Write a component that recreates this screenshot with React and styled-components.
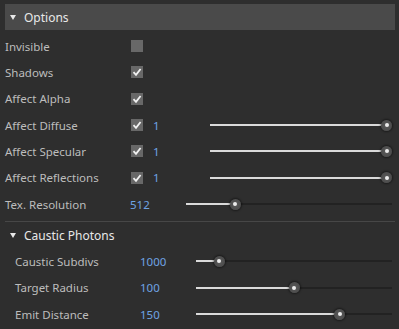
import React from "react";
import styled, { createGlobalStyle } from "styled-components";

const Global = createGlobalStyle`
  html, body { margin: 0; padding: 0; background: #2e2e2e; }
  body { font-family: "Noto Sans", "Open Sans", sans-serif; }
`;

const Page = styled.div`
  width: 399px;
  height: 329px;
  box-sizing: border-box;
  padding: 4px 4px 0 5px;
  background: #2e2e2e;
  overflow: hidden;
`;

const Panel = styled.div`
  width: 390px;
  display: flex;
  flex-direction: column;
`;

const Header = styled.div`
  height: 26px;
  display: flex;
  align-items: center;
  gap: 8px;
  padding-left: 5px;
  background: ${(p) => (p.$filled ? "#4a4a4a" : "transparent")};
  color: #e8e8e8;
  font-size: 12px;
  margin-bottom: ${(p) => p.$mb || 0}px;
`;

const Tri = styled.span`
  width: 0;
  height: 0;
  border-left: 3.5px solid transparent;
  border-right: 3.5px solid transparent;
  border-top: 5px solid #e8e8e8;
  margin-top: 1px;
`;

const Row = styled.div`
  height: 26.33px;
  display: flex;
  align-items: center;
  padding-left: ${(p) => p.$indent || 0}px;
  font-size: 11.5px;
`;

const Label = styled.span`
  flex: 0 0 ${(p) => p.$w}px;
  color: #bdbdbd;
  white-space: nowrap;
`;

const Value = styled.span`
  flex: 0 0 ${(p) => p.$w}px;
  color: #6ea3e3;
`;

const Box = styled.span`
  flex: 0 0 12px;
  height: 12px;
  background: #686868;
  display: flex;
  align-items: center;
  justify-content: center;
  margin-right: ${(p) => p.$mr || 0}px;
`;

const Divider = styled.div`
  height: 1px;
  background: #474747;
  margin-top: 4px;
`;

const Track = styled.div`
  flex: 1;
  position: relative;
  height: 11px;
  margin-right: 3px;
  &::before {
    content: "";
    position: absolute;
    left: 0;
    right: 0;
    top: 4.5px;
    height: 2px;
    background: #222;
  }
`;

const Fill = styled.div`
  position: absolute;
  left: 0;
  top: 4.5px;
  height: 2px;
  background: #dadada;
`;

const Thumb = styled.div`
  position: absolute;
  top: 0;
  width: 11px;
  height: 11px;
  margin-left: -5.5px;
  border-radius: 50%;
  background: radial-gradient(circle, #5a5a5a 0%, #474747 100%);
  box-shadow: 0 0 2px 1px rgba(0, 0, 0, 0.45);
  display: flex;
  align-items: center;
  justify-content: center;
  &::after {
    content: "";
    width: 4px;
    height: 4px;
    border-radius: 50%;
    background: #ececec;
  }
`;

const Check = () => (
  <svg width="10" height="10" viewBox="0 0 10 10">
    <path d="M1.5 5.2 L4 7.8 L8.6 2" fill="none" stroke="#f2f2f2" strokeWidth="1.8" />
  </svg>
);

function Slider({ frac }) {
  const ref = React.useRef(null);
  const [w, setW] = React.useState(0);
  React.useLayoutEffect(() => {
    if (ref.current) setW(ref.current.getBoundingClientRect().width);
  }, []);
  const pos = 5.5 + frac * Math.max(0, w - 11);
  return (
    <Track ref={ref}>
      <Fill style={{ width: pos }} />
      <Thumb style={{ left: pos }} />
    </Track>
  );
}

export default function App() {
  return (
    <Page>
      <Global />
      <Panel>
        <Header $filled $mb={3}>
          <Tri />
          Options
        </Header>
        <Row>
          <Label $w={126}>Invisible</Label>
          <Box />
        </Row>
        <Row>
          <Label $w={126}>Shadows</Label>
          <Box><Check /></Box>
        </Row>
        <Row>
          <Label $w={126}>Affect Alpha</Label>
          <Box><Check /></Box>
        </Row>
        <Row>
          <Label $w={126}>Affect Diffuse</Label>
          <Box $mr={10}><Check /></Box>
          <Value $w={57}>1</Value>
          <Slider frac={1} />
        </Row>
        <Row>
          <Label $w={126}>Affect Specular</Label>
          <Box $mr={10}><Check /></Box>
          <Value $w={57}>1</Value>
          <Slider frac={1} />
        </Row>
        <Row>
          <Label $w={126}>Affect Reflections</Label>
          <Box $mr={10}><Check /></Box>
          <Value $w={57}>1</Value>
          <Slider frac={1} />
        </Row>
        <Row>
          <Label $w={125}>Tex. Resolution</Label>
          <Value $w={56}>512</Value>
          <Slider frac={0.224} />
        </Row>
        <Divider />
        <Header>
          <Tri />
          Caustic Photons
        </Header>
        <Row $indent={10}>
          <Label $w={125}>Caustic Subdivs</Label>
          <Value $w={56}>1000</Value>
          <Slider frac={0.097} />
        </Row>
        <Row $indent={10}>
          <Label $w={125}>Target Radius</Label>
          <Value $w={56}>100</Value>
          <Slider frac={0.5} />
        </Row>
        <Row $indent={10}>
          <Label $w={125}>Emit Distance</Label>
          <Value $w={56}>150</Value>
          <Slider frac={0.747} />
        </Row>
      </Panel>
    </Page>
  );
}
